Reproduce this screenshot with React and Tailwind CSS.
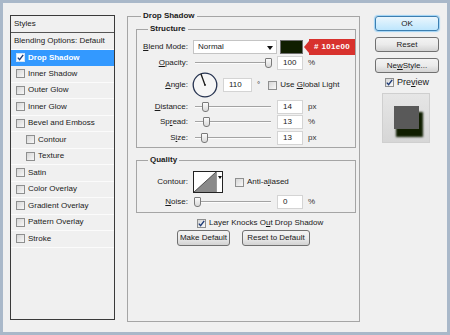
import React from "react";

const Check = ({ checked, white }) => (
  <span
    className={
      "w-[9px] h-[9px] shrink-0 border flex items-center justify-center " +
      (white
        ? "border-[#d0e4f7] bg-white"
        : "border-[#8e8f8f] bg-gradient-to-br from-[#d6d6d6] to-[#f8f8f8]")
    }
  >
    {checked && (
      <svg width="7" height="7" viewBox="0 0 7 7">
        <path d="M0.8 3.6 L2.6 5.6 L6.2 0.9" fill="none" stroke="#1d3b78" strokeWidth="1.4" />
      </svg>
    )}
  </span>
);

const U = ({ children }) => <span className="underline underline-offset-1">{children}</span>;

const Slider = ({ thumb }) => (
  <div className="relative w-[76px] h-[14px] ml-[7px] shrink-0">
    <div className="absolute left-0 right-0 top-[6px] h-[1px] bg-[#a3a3a3]" />
    <div className="absolute left-0 right-0 top-[7px] h-[1px] bg-[#fcfcfc]" />
    <div
      className="absolute top-[2px] w-[7px] h-[10px] border border-[#7a7a7a] bg-gradient-to-b from-[#fbfbfb] to-[#d9d9d9] rounded-b-[3px] rounded-t-[1px]"
      style={{ left: thumb - 3 }}
    />
  </div>
);

const Input = ({ value, w = "w-[26px]", ml = "ml-[6px]" }) => (
  <div className={w + " " + ml + " h-[14px] shrink-0 bg-white border border-[#d4d4d4] flex items-center pl-[5px]"}>
    {value}
  </div>
);

const Label = ({ children }) => <div className="w-[51px] shrink-0 text-right">{children}</div>;

const SliderRow = ({ label, thumb, value, unit, mt }) => (
  <div className={"flex items-center h-[14px] " + mt}>
    <Label>{label}</Label>
    <Slider thumb={thumb} />
    <Input value={value} />
    <span className="ml-[5px] text-[#333]">{unit}</span>
  </div>
);

const Button = ({ children, w, primary, cls = "" }) => (
  <div
    className={
      w +
      " h-[15px] shrink-0 rounded-[3px] border flex items-center justify-center " +
      (primary
        ? "border-[#3c7fb1] bg-gradient-to-b from-[#eaf6fd] to-[#bee6fd] shadow-[0_0_1px_1px_#9fd3f5] "
        : "border-[#707070] bg-gradient-to-b from-[#f3f3f3] via-[#ebebeb] to-[#d3d3d3] ") +
      cls
    }
  >
    {children}
  </div>
);

const styleItems = [
  { t: "Inner Shadow" },
  { t: "Outer Glow" },
  { t: "Inner Glow" },
  { t: "Bevel and Emboss" },
  { t: "Contour", indent: true },
  { t: "Texture", indent: true },
  { t: "Satin" },
  { t: "Color Overlay" },
  { t: "Gradient Overlay" },
  { t: "Pattern Overlay" },
  { t: "Stroke" },
];

export default function App() {
  return (
    <div className="w-[450px] h-[335px] bg-[#f0f0f0] border-[3px] border-[#a9b8c9] flex items-start font-['Liberation_Sans',Arial,sans-serif] text-[8px] leading-[10px] text-[#1a1a1a] overflow-hidden">
      {/* Styles list */}
      <div className="ml-[7px] mt-[12px] w-[105px] h-[305px] shrink-0 border border-[#3a3a3a] flex flex-col bg-[#f0f0f0]">
        <div className="h-[17px] shrink-0 border-b border-[#555] flex items-center pl-[3px]">Styles</div>
        <div className="h-[16.5px] shrink-0 border-b border-[#fcfcfc] flex items-center pl-[3px]">
          Blending Options: Default
        </div>
        <div className="h-[16.5px] shrink-0 bg-[#3399ff] text-white font-semibold flex items-center pl-[5px] gap-[3px]">
          <Check checked white />
          <span>Drop Shadow</span>
        </div>
        {styleItems.map((s) => (
          <div
            key={s.t}
            className={
              "h-[16.5px] shrink-0 border-b border-[#fbfbfb] flex items-center gap-[3px] " +
              (s.indent ? "pl-[15px]" : "pl-[5px]")
            }
          >
            <Check />
            <span>{s.t}</span>
          </div>
        ))}
      </div>

      {/* Drop Shadow group */}
      <div className="ml-[12px] mt-[13px] w-[233px] h-[306px] shrink-0 border border-[#a5a5a5] relative flex flex-col">
        <span className="absolute left-[13px] top-[-6px] px-[2px] bg-[#f0f0f0] font-bold">Drop Shadow</span>

        {/* Structure */}
        <div className="mt-[12px] ml-[8px] mr-[3px] border border-[#a5a5a5] relative flex flex-col pt-[10px] pb-[2px]">
          <span className="absolute left-[11px] top-[-6px] px-[2px] bg-[#f0f0f0] font-bold">Structure</span>

          <div className="flex items-center h-[14px]">
            <Label>
              <U>B</U>lend Mode:
            </Label>
            <div className="ml-[5px] w-[84px] h-[14px] shrink-0 bg-white border border-[#c4c4c4] flex items-center pl-[4px] relative">
              Normal
              <svg className="absolute right-[3px] top-[5px]" width="6" height="4" viewBox="0 0 6 4">
                <path d="M0 0 H6 L3 4 Z" fill="#111" />
              </svg>
            </div>
            <div className="ml-[3px] w-[23px] h-[14px] shrink-0 bg-[#101e00] border border-[#6f6f6f]" />
            <div className="ml-[1px] -my-[2px] flex items-center shrink-0">
              <svg width="5" height="12" viewBox="0 0 5 12">
                <path d="M5 0 L0 6 L5 12 Z" fill="#d8322e" />
              </svg>
              <div className="h-[16px] w-[46px] bg-[#d8322e] text-white font-bold flex items-center justify-center tracking-[0.3px]">
                # 101e00
              </div>
            </div>
          </div>

          <SliderRow
            mt="mt-[2px]"
            label={
              <>
                <U>O</U>pacity:
              </>
            }
            thumb={73}
            value="100"
            unit="%"
          />

          <div className="flex items-center h-[24px] mt-[3px]">
            <Label>
              <U>A</U>ngle:
            </Label>
            <svg className="ml-[4px] shrink-0" width="26" height="26" viewBox="0 0 26 26">
              <circle cx="13" cy="13" r="11.8" fill="#f6f6f6" stroke="#263350" strokeWidth="1.3" />
              <path d="M13 13 L8.9 1.8" stroke="#1a1a1a" strokeWidth="1.3" />
              <circle cx="13" cy="13" r="0.9" fill="#1a1a1a" />
            </svg>
            <Input value="110" w="w-[29px]" ml="ml-[5px]" />
            <span className="ml-[5px]">°</span>
            <span className="ml-[8px] flex items-center gap-[3px]">
              <Check />
              <span>
                Use <U>G</U>lobal Light
              </span>
            </span>
          </div>

          <SliderRow
            mt="mt-[3px]"
            label={
              <>
                <U>D</U>istance:
              </>
            }
            thumb={10}
            value="14"
            unit="px"
          />
          <SliderRow
            mt="mt-[1px]"
            label={
              <>
                Sp<U>r</U>ead:
              </>
            }
            thumb={11}
            value="13"
            unit="%"
          />
          <SliderRow
            mt="mt-[2px]"
            label={
              <>
                S<U>i</U>ze:
              </>
            }
            thumb={9}
            value="13"
            unit="px"
          />
        </div>

        {/* Quality */}
        <div className="mt-[12px] ml-[8px] mr-[3px] border border-[#a5a5a5] relative flex flex-col pt-[10px] pb-[3px]">
          <span className="absolute left-[11px] top-[-6px] px-[2px] bg-[#f0f0f0] font-bold">Quality</span>
          <div className="flex items-center h-[22px]">
            <Label>Contour:</Label>
            <div className="ml-[5px] w-[30px] h-[22px] shrink-0 border border-[#222] flex bg-white">
              <svg width="22" height="20" viewBox="0 0 22 20" className="shrink-0">
                <path d="M0 20 L22 0 L22 20 Z" fill="#8a8a8a" />
                <path d="M0 20 L22 0" stroke="#333" strokeWidth="0.8" />
              </svg>
              <div className="flex-1 border-l border-[#999] flex items-start justify-center pt-[4px]">
                <svg width="4" height="3" viewBox="0 0 4 3">
                  <path d="M0 0 H4 L2 3 Z" fill="#111" />
                </svg>
              </div>
            </div>
            <span className="ml-[12px] flex items-center gap-[3px]">
              <Check />
              <span>
                Anti-a<U>l</U>iased
              </span>
            </span>
          </div>
          <SliderRow
            mt="mt-[2px]"
            label={
              <>
                <U>N</U>oise:
              </>
            }
            thumb={2}
            value="0"
            unit="%"
          />
        </div>

        <div className="mt-[4px] h-[12px] pl-[69px] flex items-center gap-[3px]">
          <Check checked />
          <span>
            Layer Knocks O<U>u</U>t Drop Shadow
          </span>
        </div>

        <div className="mt-[1px] pl-[49px] flex items-center">
          <Button w="w-[53px]" cls="h-[16px]">Make Default</Button>
          <Button w="w-[68px]" cls="ml-[12px] h-[16px]">Reset to Default</Button>
        </div>
      </div>

      {/* Right column */}
      <div className="ml-[15px] mt-[13px] w-[64px] shrink-0 flex flex-col">
        <Button w="w-[64px]" primary>
          OK
        </Button>
        <Button w="w-[64px]" cls="mt-[6px]">
          Reset
        </Button>
        <Button w="w-[64px]" cls="mt-[6px]">
          Ne<U>w</U> Style...
        </Button>
        <div className="mt-[3px] h-[12px] pl-[10px] flex items-center gap-[3px]">
          <Check checked />
          <span className="text-[9px]">
            Pre<U>v</U>iew
          </span>
        </div>
        <div className="mt-[5px] ml-[7px] w-[48px] h-[50px] bg-gradient-to-b from-[#e6e6e6] to-[#d6d6d6] border border-[#cfcfcf] pt-[12px] pl-[11px]">
          <div className="w-[25px] h-[23px] bg-[#595959] shadow-[3px_7px_2px_1px_#101e00]" />
        </div>
      </div>
    </div>
  );
}
